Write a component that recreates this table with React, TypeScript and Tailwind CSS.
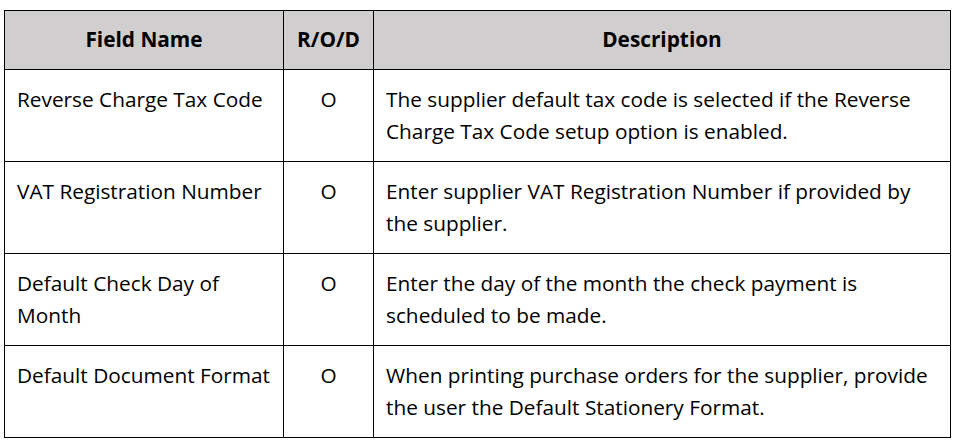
import React from "react";

const rows = [
  {
    name: "Reverse Charge Tax Code",
    rod: "O",
    desc: "The supplier default tax code is selected if the Reverse Charge Tax Code setup option is enabled.",
  },
  {
    name: "VAT Registration Number",
    rod: "O",
    desc: "Enter supplier VAT Registration Number if provided by the supplier.",
  },
  {
    name: "Default Check Day of Month",
    rod: "O",
    desc: "Enter the day of the month the check payment is scheduled to be made.",
  },
  {
    name: "Default Document Format",
    rod: "O",
    desc: "When printing purchase orders for the supplier, provide the user the Default Stationery Format.",
  },
];

export default function App() {
  return (
    <div className="w-[955px] h-[446px] bg-white pt-[10px] pl-[4px] font-['Open_Sans',sans-serif] text-black">
      <table className="border-collapse table-fixed w-[946px]">
        <colgroup>
          <col className="w-[279px]" />
          <col className="w-[90px]" />
          <col className="w-[577px]" />
        </colgroup>
        <thead>
          <tr className="h-[59px] bg-[#d0cece]">
            <th className="border border-black text-[20.8px] font-bold">Field Name</th>
            <th className="border border-black text-[20.8px] font-bold">R/O/D</th>
            <th className="border border-black text-[20.8px] font-bold">Description</th>
          </tr>
        </thead>
        <tbody>
          {rows.map((r) => (
            <tr key={r.name} className="h-[92px]">
              <td className="border border-black align-top pl-[12px] pr-[10px] pt-[13px] pb-[13px] text-[20.8px] leading-[32px]">
                {r.name}
              </td>
              <td className="border border-black align-top text-center pt-[13px] text-[20.8px] leading-[32px]">
                {r.rod}
              </td>
              <td className="border border-black align-top pl-[12px] pr-[14px] pt-[13px] pb-[13px] text-[20.8px] leading-[32px]">
                {r.desc}
              </td>
            </tr>
          ))}
        </tbody>
      </table>
    </div>
  );
}
